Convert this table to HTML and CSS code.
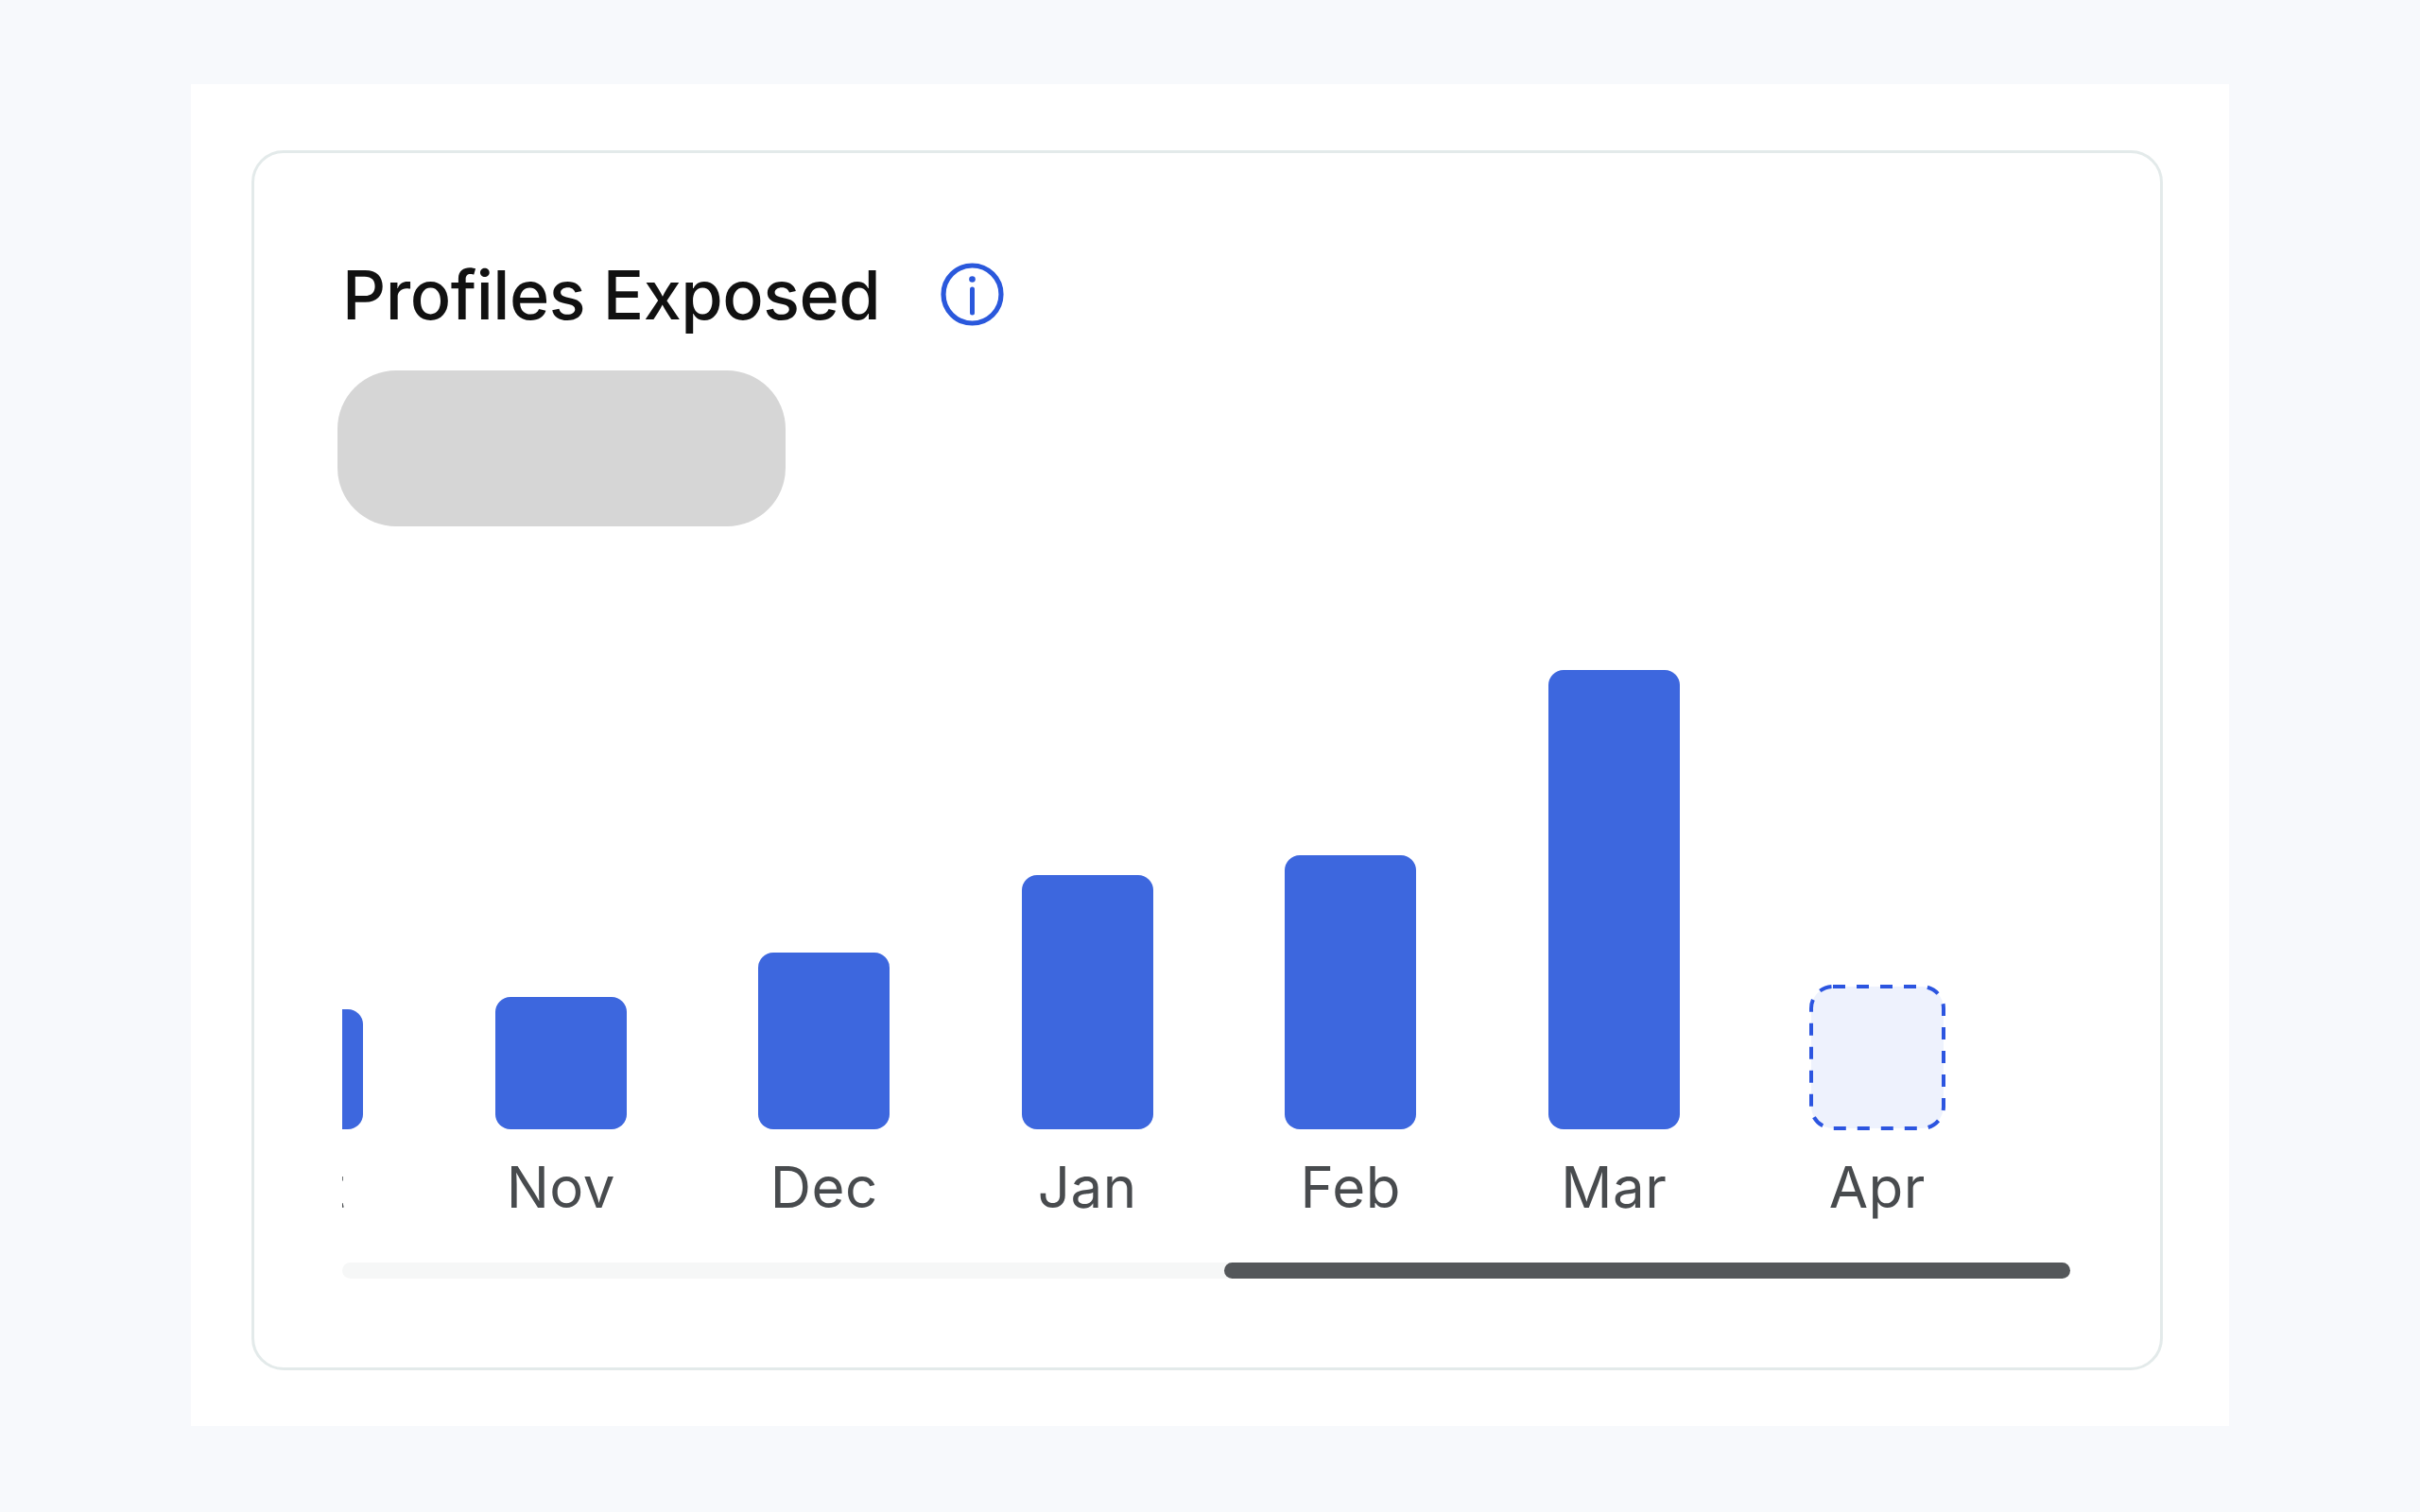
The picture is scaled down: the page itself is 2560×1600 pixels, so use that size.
FILE: index.html
```html
<!DOCTYPE html>
<html lang="en">
<head>
<meta charset="utf-8">
<title>Profiles Exposed</title>
<link rel="stylesheet" href="styles.css">
</head>
<body>
<div class="panel">
  <section class="card">
    <div class="head">
      <h2 class="title">Profiles Exposed</h2>
      <svg class="info" viewBox="0 0 67 67" aria-hidden="true">
        <circle cx="33.5" cy="33.5" r="30.5" fill="none" stroke="#2a58dc" stroke-width="5.2"/>
        <circle cx="33.5" cy="17.5" r="3.3" fill="#2a58dc"/>
        <line x1="33.5" y1="28" x2="33.5" y2="53" stroke="#2a58dc" stroke-width="5" stroke-linecap="round"/>
      </svg>
    </div>
    <div class="pill"></div>
    <div class="viewport">
      <div class="track-inner">
        <div class="col"><div class="area"><div class="bar" style="height:210px"></div></div><div class="lbl">Apr</div></div>
        <div class="col"><div class="area"><div class="bar" style="height:180px"></div></div><div class="lbl">May</div></div>
        <div class="col"><div class="area"><div class="bar" style="height:160px"></div></div><div class="lbl">Jun</div></div>
        <div class="col"><div class="area"><div class="bar" style="height:200px"></div></div><div class="lbl">Jul</div></div>
        <div class="col"><div class="area"><div class="bar" style="height:150px"></div></div><div class="lbl">Aug</div></div>
        <div class="col"><div class="area"><div class="bar" style="height:170px"></div></div><div class="lbl">Sep</div></div>
        <div class="col"><div class="area"><div class="bar" style="height:127px"></div></div><div class="lbl">Oct</div></div>
        <div class="col"><div class="area"><div class="bar" style="height:140px"></div></div><div class="lbl">Nov</div></div>
        <div class="col"><div class="area"><div class="bar" style="height:187px"></div></div><div class="lbl">Dec</div></div>
        <div class="col"><div class="area"><div class="bar" style="height:269px"></div></div><div class="lbl">Jan</div></div>
        <div class="col"><div class="area"><div class="bar" style="height:290px"></div></div><div class="lbl">Feb</div></div>
        <div class="col"><div class="area"><div class="bar" style="height:486px"></div></div><div class="lbl">Mar</div></div>
        <div class="col"><div class="area">
          <svg class="pending" viewBox="0 0 144 154" aria-hidden="true">
            <rect x="2" y="2" width="140" height="150" rx="23" ry="23" fill="#eef2fd" stroke="#2c55e0" stroke-width="4" stroke-dasharray="13 12"/>
          </svg>
        </div><div class="lbl">Apr</div></div>
      </div>
    </div>
    <div class="scroll">
      <div class="thumb"></div>
    </div>
  </section>
</div>
</body>
</html>
```
FILE: styles.css
```css
* { box-sizing: border-box; }
html, body { margin: 0; padding: 0; }
body {
  background: #f7f9fc;
  font-family: Inter, "Noto Sans", sans-serif;
  width: 2560px;
  height: 1600px;
  padding: 89px 0 0 202px;
}
.panel {
  width: 2156px;
  background: #ffffff;
  padding: 70px 70px 59px 64px;
}
.card {
  border: 3px solid #e3eaea;
  border-radius: 34px;
  padding: 116px 95px 94px 89px;
  display: flex;
  flex-direction: column;
}
.head {
  display: flex;
  align-items: center;
  height: 67px;
}
.title {
  margin: 0;
  font-size: 72px;
  line-height: 67px;
  font-weight: 500;
  color: #111111;
  letter-spacing: -0.5px;
  padding-left: 4px;
}
.info {
  width: 67px;
  height: 67px;
  margin-left: 64px;
  flex-shrink: 0;
}
.pill {
  margin-top: 47px;
  width: 474px;
  height: 165px;
  border-radius: 62px;
  background: #d6d6d6;
  margin-left: -1px;
}
.viewport {
  margin-left: 4px;
  display: flex;
  justify-content: flex-end;
  overflow: hidden;
}
.track-inner {
  display: flex;
  flex-shrink: 0;
  padding: 0 65px;
}
.col {
  width: 278.5px;
  flex-shrink: 0;
  display: flex;
  flex-direction: column;
  align-items: center;
}
.area {
  height: 638px;
  display: flex;
  align-items: flex-end;
}
.bar {
  width: 139px;
  background: #3d67de;
  border-radius: 16px;
}
.pending {
  display: block;
  width: 144px;
  height: 154px;
  margin-bottom: -1px;
}
.lbl {
  margin-top: 25px;
  font-size: 60px;
  line-height: 72px;
  color: #484b4e;
  font-weight: 400;
  letter-spacing: 0.5px;
}
.scroll {
  margin-top: 44px;
  margin-left: 4px;
  height: 17px;
  background: #f6f7f7;
  border-radius: 9px;
  display: flex;
  justify-content: flex-end;
}
.thumb {
  width: 895px;
  height: 17px;
  border-radius: 9px;
  background: #54575a;
}
```
